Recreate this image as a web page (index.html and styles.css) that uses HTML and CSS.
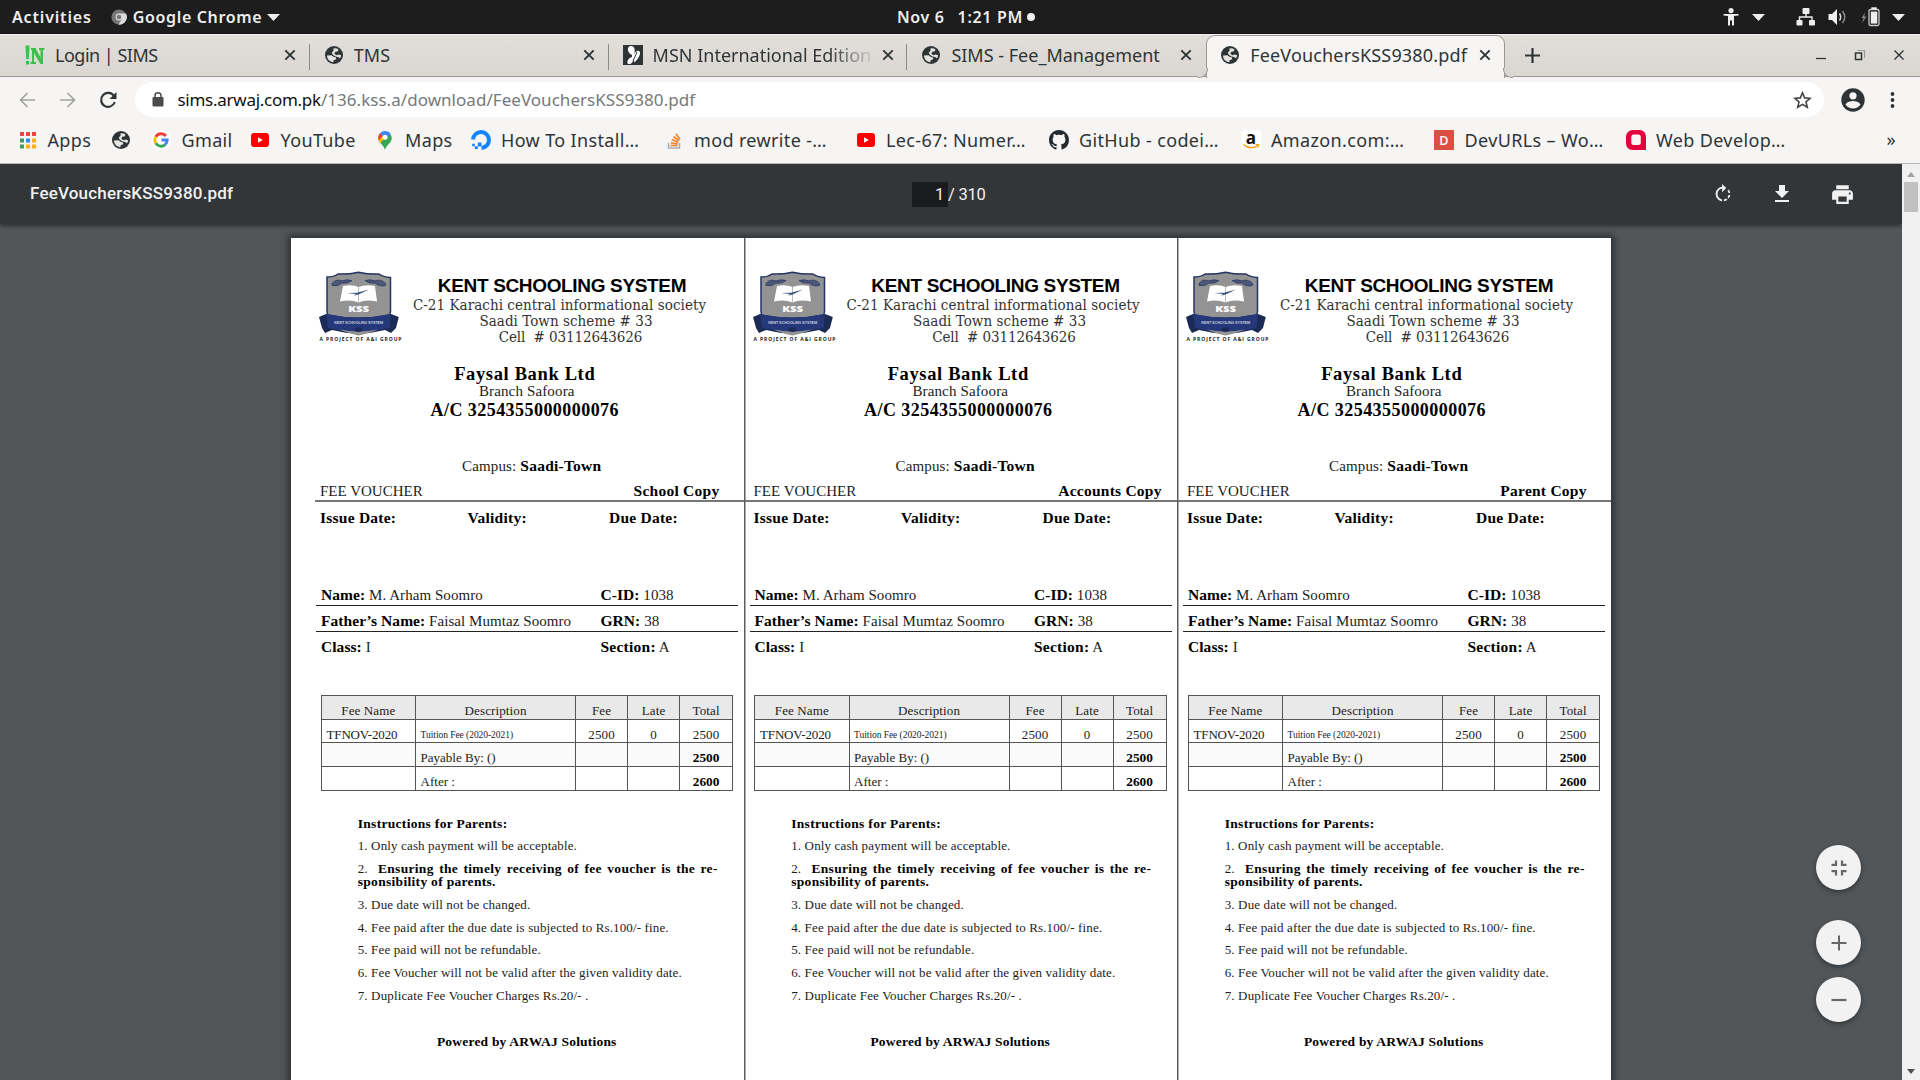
FILE: index.html
```html
<!DOCTYPE html>
<html lang="en">
<head>
<meta charset="utf-8">
<title>FeeVouchersKSS9380.pdf</title>
<link rel="stylesheet" href="styles.css">
</head>
<body>
<svg width="0" height="0" class="defs">
  <symbol id="globe" viewBox="0 0 20 20">
    <circle cx="10" cy="10" r="9" fill="#2e3436"/>
    <path d="M3 10.500L7.500 10.200L9.500 11.800L12 12.400L12.200 14.200L9.600 15.200L9.400 17.200C6 17 3.100 14.400 3 10.500ZM9.500 3.200L13 3.600L14.600 4.700L13.400 6.400L11.200 6.800L10.400 8.800L12.400 10.200L14.800 9.600L17.100 10.200C17 11.400 16.600 12.400 16 13.200L14 12L11.400 11.400L8.600 9.400L7.800 7.400L9.600 5.800Z" fill="#e6e4e1"/>
  </symbol>
  <symbol id="close" viewBox="0 0 12 12"><path d="M1.300 1.300L10.700 10.700M10.700 1.300L1.300 10.700" stroke="#2e3436" stroke-width="1.900" fill="none"/></symbol>
  <symbol id="caret" viewBox="0 0 13 7"><path d="M0 0H13L6.500 7Z" fill="#eee"/></symbol>
  <symbol id="youtube" viewBox="0 0 20 20"><rect x="1" y="3" width="18" height="14" rx="3" fill="#f00"/><path d="M8 7.200L12.800 10L8 12.800Z" fill="#fff"/></symbol>
</svg>

<header class="desktop-bar">
  <div class="desk-left">
    <span>Activities</span>
    <svg class="chrome-mark" viewBox="0 0 16 16"><circle cx="8" cy="8" r="7.600" fill="#777"/><path d="M8 4.500H15A7.600 7.600 0 0 1 7.500 15.600L11 9.800Z" fill="#ddd"/><circle cx="8" cy="8" r="3.400" fill="#ddd"/><circle cx="8" cy="8" r="2.300" fill="#777"/></svg>
    <span>Google Chrome</span>
    <svg class="caret"><use href="#caret"/></svg>
  </div>
  <div class="desk-clock"><span>Nov 6</span><span>1:21 PM</span><i></i></div>
  <div class="desk-right">
    <svg width="16" height="18" viewBox="0 0 16 18"><circle cx="8" cy="2.600" r="2.600" fill="#eee"/><path d="M.5 6H15.500V7.500L11 8V17.500H9V12.500H7V17.500H5V8L.5 7.500Z" fill="#eee"/></svg>
    <svg class="caret access"><use href="#caret"/></svg>
    <svg width="20" height="18" viewBox="0 0 20 18" fill="#eee"><rect x="6.500" y="0" width="7" height="6" rx="1"/><rect x=".5" y="12" width="6" height="5.500" rx="1"/><rect x="13" y="12" width="6" height="5.500" rx="1"/><path d="M3.500 13V9H16V13M10 5V9" stroke="#eee" stroke-width="1.400" fill="none"/></svg>
    <svg width="19" height="18" viewBox="0 0 19 18"><path d="M.5 6H4L9 1V17L4 12H.5Z" fill="#eee"/><path d="M11.500 5.500Q13.800 9 11.500 12.500" stroke="#ddd" stroke-width="1.500" fill="none"/><path d="M14.500 3Q19 9 14.500 15" stroke="#888" stroke-width="1.500" fill="none"/></svg>
    <svg width="19" height="20" viewBox="0 0 19 20"><path d="M4.500 5L.5 11H2.500L1 16L5.500 9.500H3Z" fill="#888"/><rect x="8" y="2.500" width="10" height="16" rx="1.500" fill="none" stroke="#ccc" stroke-width="1.300"/><rect x="10.300" y=".3" width="5.500" height="2" fill="#eee"/><rect x="9.800" y="4.600" width="6.500" height="12" fill="#eee"/></svg>
    <svg class="caret"><use href="#caret"/></svg>
  </div>
</header>

<nav class="tabs">
  <div class="tab">
    <svg class="fav" viewBox="0 0 20 20"><path d="M.5.500H4.500L3.800 14H1.200ZM1 16H4V19.500H1ZM6 3H10.500L15.500 12.500V5H14V3H19.500V5H18V19H15.500L9 8V17H11V19H5.500V17H7V5H6Z" fill="#3fbf4c"/></svg>
    <span class="title first">Login | SIMS</span><svg class="x"><use href="#close"/></svg>
  </div>
  <div class="tab"><svg class="fav"><use href="#globe"/></svg><span class="title">TMS</span><svg class="x"><use href="#close"/></svg></div>
  <div class="tab">
    <svg class="fav" viewBox="0 0 20 20"><rect width="20" height="20" fill="#2e3436"/><path d="M9 10C4 8 3.500 1 8 1C12 1 12.500 6 11 9.500C12 7 15 4 17 7C17.500 11 14 15 11.500 17.500L10.500 14C10 18 8 19.500 5 19C3.500 17 5 13 9 12Z" fill="#fff"/><path d="M10 16L14 7" stroke="#2e3436"/></svg>
    <span class="title fade">MSN International Edition</span><svg class="x"><use href="#close"/></svg>
  </div>
  <div class="tab before"><svg class="fav"><use href="#globe"/></svg><span class="title">SIMS - Fee_Management</span><svg class="x"><use href="#close"/></svg></div>
  <div class="tab active"><svg class="fav"><use href="#globe"/></svg><span class="title">FeeVouchersKSS9380.pdf</span><svg class="x"><use href="#close"/></svg></div>
  <div class="after">
    <svg width="15" height="15" viewBox="0 0 15 15"><path d="M7.500 0V15M0 7.500H15" stroke="#2e3436" stroke-width="2.200"/></svg>
    <div class="win">
      <svg width="12" height="12" viewBox="0 0 12 12"><path d="M1 9.500H11" stroke="#2e3436" stroke-width="1.300"/></svg>
      <svg width="12" height="12" viewBox="0 0 12 12" fill="none"><path d="M3.500 1.500H10.500V9" stroke="#999" stroke-width="1.200"/><rect x="1.500" y="4" width="6" height="6.500" stroke="#2e3436" stroke-width="1.500"/></svg>
      <svg width="12" height="12" viewBox="0 0 12 12"><path d="M1.500 1.500L10.500 10.500M10.500 1.500L1.500 10.500" stroke="#2e3436" stroke-width="1.400"/></svg>
    </div>
  </div>
</nav>

<div class="address-row">
  <svg class="nav-ic" width="17" height="16" viewBox="0 0 17 16" fill="none" stroke="#a2a2a1" stroke-width="1.700"><path d="M16 8H2M8.500 1L1.500 8L8.500 15"/></svg>
  <svg class="nav-ic" width="17" height="16" viewBox="0 0 17 16" fill="none" stroke="#a2a2a1" stroke-width="1.700"><path d="M1 8H15M8.500 1L15.500 8L8.500 15"/></svg>
  <svg width="18" height="18" viewBox="0 0 18 18"><path d="M15 5A7 7 0 1 0 15.800 11" stroke="#2e3436" stroke-width="2.100" fill="none"/><path d="M17.500 1V8H10.500Z" fill="#2e3436"/></svg>
  <div class="omnibox">
    <svg width="12" height="15" viewBox="0 0 12 15"><rect x=".5" y="5" width="11" height="9.500" rx="1" fill="#4b4b4b"/><path d="M3 6V3.800A3 3 0 0 1 9 3.800V6" stroke="#4b4b4b" stroke-width="1.500" fill="none"/></svg>
    <span class="url"><b>sims.arwaj.com.pk</b>/136.kss.a/download/FeeVouchersKSS9380.pdf</span>
    <svg width="19" height="18" viewBox="0 0 19 18"><path d="M9.500 1.800L11.700 6.900L17.200 7.300L13 10.900L14.300 16.300L9.500 13.400L4.700 16.300L6 10.900L1.800 7.300L7.300 6.900Z" fill="none" stroke="#444" stroke-width="1.600"/></svg>
  </div>
  <svg width="24" height="24" viewBox="0 0 24 24"><circle cx="12" cy="12" r="11.700" fill="#2e3436"/><circle cx="12" cy="7.800" r="3.600" fill="#f6f5f4"/><path d="M4.500 16.500C6 13.800 9.500 13 12 13S18 13.800 19.500 16.500C17.800 19 15 20.500 12 20.500S6.200 19 4.500 16.500Z" fill="#f6f5f4"/></svg>
  <svg width="5" height="16" viewBox="0 0 5 16" fill="#2e3436"><circle cx="2.500" cy="2" r="1.900"/><circle cx="2.500" cy="8" r="1.900"/><circle cx="2.500" cy="14" r="1.900"/></svg>
</div>

<div class="bookmarks">
  <div class="bm apps"><svg width="16" height="17" viewBox="0 0 16 17"><g fill="#f04343"><path d="M0 0H4V4H0ZM6 0H10V4H6ZM12 0H16V4H12Z"/></g><path d="M0 6.500H4V10.500H0ZM0 12.500H4V16.500H0Z" fill="#3d9d5a"/><path d="M6 6.500H10V10.500H6Z" fill="#2a8bf5"/><path d="M12 6.500H16V10.500H12ZM6 12.500H10V16.500H6ZM12 12.500H16V16.500H12Z" fill="#f9b01e"/></svg><span>Apps</span></div>
  <div class="bm"><svg class="fav"><use href="#globe"/></svg></div>
  <div class="bm"><svg class="fav" viewBox="0 0 20 20"><circle cx="10" cy="10" r="10" fill="#fff"/><g fill="none" stroke-width="2.900"><path d="M15 6A6.200 6.200 0 0 0 4.800 6.800" stroke="#ea4335"/><path d="M4.800 6.800A6.200 6.200 0 0 0 4.800 13.200" stroke="#fbbc05"/><path d="M4.800 13.200A6.200 6.200 0 0 0 14 14.800" stroke="#34a853"/><path d="M14 14.800A6.200 6.200 0 0 0 16.200 10H10.500" stroke="#4285f4"/></g></svg><span>Gmail</span></div>
  <div class="bm"><svg class="fav"><use href="#youtube"/></svg><span>YouTube</span></div>
  <div class="bm"><svg class="fav" viewBox="0 0 20 20"><path d="M3.300 9.500A6.800 6.800 0 0 1 16.800 7.500C16.800 13 11.500 14.500 10 20C9 15.500 4.500 13 3.300 9.500Z" fill="#34a853"/><path d="M3.300 9.500Q3 6 5 3.300L10 7.500L5.500 13Q3.800 11 3.300 9.500Z" fill="#fbbc04"/><path d="M3.200 8Q3.200 5 5 3.300L8 5.800L4 10.500Z" fill="#ea4335"/><path d="M5 3.300A6.800 6.800 0 0 1 15.800 4L10 10L7.500 6Z" fill="#4285f4"/><circle cx="10" cy="7.200" r="2.500" fill="#fff"/></svg><span>Maps</span></div>
  <div class="bm"><svg class="fav" viewBox="0 0 20 20"><path d="M2 9.500A8 8 0 1 1 10.500 18" stroke="#1285ff" stroke-width="4" fill="none"/><path d="M6.800 12.500H10.500V16.500H6.800ZM3.800 16.200H6.800V19H3.800ZM1.200 13.700H3.800V16.200H1.200Z" fill="#1285ff"/></svg><span>How To Install…</span></div>
  <div class="bm"><svg class="fav" viewBox="0 0 20 20"><path d="M4.500 13V18H15.500V13" stroke="#aab0b5" stroke-width="1.600" fill="none"/><path d="M6.500 15.500H13.500M6.800 12.700L13.700 14M7.700 9.500L14.200 12.300M9.500 6.500L15 10.800M12 3.800L16 9.500" stroke="#f48024" stroke-width="1.600"/></svg><span>mod rewrite -…</span></div>
  <div class="bm"><svg class="fav"><use href="#youtube"/></svg><span>Lec-67: Numer…</span></div>
  <div class="bm"><svg class="fav" viewBox="0 0 16 16"><path fill="#24292e" d="M8 0C3.580 0 0 3.580 0 8c0 3.540 2.290 6.530 5.470 7.590.4.070.55-.17.55-.38 0-.19-.01-.82-.01-1.490-2.010.37-2.530-.49-2.690-.94-.09-.23-.48-.94-.82-1.130-.28-.15-.68-.52-.01-.53.63-.01 1.080.58 1.230.82.72 1.210 1.870.87 2.330.66.070-.52.28-.87.51-1.070-1.780-.2-3.640-.89-3.640-3.950 0-.87.31-1.590.82-2.150-.08-.2-.36-1.020.08-2.120 0 0 .67-.21 2.200.82.64-.18 1.320-.27 2-.27s1.360.09 2 .27c1.530-1.040 2.200-.82 2.200-.82.44 1.100.16 1.920.08 2.120.51.56.82 1.270.82 2.150 0 3.070-1.870 3.750-3.650 3.950.29.25.54.73.54 1.480 0 1.070-.01 1.930-.01 2.200 0 .21.15.46.55.38A8.010 8.010 0 0 0 16 8c0-4.420-3.580-8-8-8z"/></svg><span>GitHub - codei…</span></div>
  <div class="bm"><svg class="fav" viewBox="0 0 20 20"><rect width="20" height="20" rx="3" fill="#fff"/><text x="10" y="13.500" class="amz">a</text><path d="M2.500 14.500Q9.500 20.500 17 15.500" stroke="#f90" stroke-width="1.500" fill="none"/><path d="M14.500 14.500H17.800L16.800 17.800" stroke="#f90" fill="none"/></svg><span>Amazon.com:…</span></div>
  <div class="bm"><svg class="fav" viewBox="0 0 20 20"><rect width="20" height="20" fill="#dc5044"/><text x="10" y="14.500" class="dev">D</text></svg><span>DevURLs – Wo…</span></div>
  <div class="bm"><svg class="fav" viewBox="0 0 20 20"><path d="M6 0H14Q20 1 20 7V20H6Q0 19 0 13V6Q1 1 6 0Z" fill="#e4003a"/><rect x="5.300" y="4.500" width="9.500" height="10.500" rx="2.500" fill="#f6f5f4"/></svg><span>Web Develop…</span></div>
  <span class="more">»</span>
</div>

<main class="viewer">
  <div class="stage">
    <div class="pdf-bar">
      <span class="pdf-name">FeeVouchersKSS9380.pdf</span>
      <div class="pager"><span class="page-no">1</span><span>/ 310</span></div>
      <div class="tools">
        <svg width="22" height="22" viewBox="0 0 24 24" fill="#f1f1f1"><path d="M15.550 5.550L11 1v3.070C7.060 4.560 4 7.920 4 12s3.050 7.440 7 7.930v-2.020c-2.840-.48-5-2.940-5-5.910s2.160-5.430 5-5.910V10l4.550-4.450zM19.930 11c-.17-1.390-.72-2.730-1.620-3.890l-1.420 1.420c.54.750.88 1.600 1.020 2.470h2.020zM13 17.900v2.020c1.390-.17 2.740-.71 3.900-1.610l-1.440-1.440c-.75.540-1.590.890-2.460 1.030zm3.890-2.420l1.420 1.410c.9-1.160 1.450-2.500 1.620-3.890h-2.020c-.14.870-.48 1.720-1.020 2.480z"/></svg>
        <svg width="24" height="24" viewBox="0 0 24 24" fill="#f1f1f1"><path d="M19 9h-4V3H9v6H5l7 7 7-7zM5 18v2h14v-2H5z"/></svg>
        <svg width="25" height="25" viewBox="0 0 24 24" fill="#f1f1f1"><path d="M19 8H5c-1.660 0-3 1.340-3 3v6h4v4h12v-4h4v-6c0-1.660-1.340-3-3-3zm-3 11H8v-5h8v5zm3-7c-.55 0-1-.45-1-1s.45-1 1-1 1 .45 1 1-.45 1-1 1zm-1-9H6v4h12V3z"/></svg>
      </div>
    </div>

    <div class="sheet">
      <section class="voucher">
        <div class="school">
          <svg class="crest" viewBox="316 270 90 76">
            <path d="M327 277Q334 277 338 274Q348 274.500 358.500 272.200Q369 274.500 379 274Q383 277 390.500 277.500L390.500 312Q388 328 358.500 334Q329 328 327 312Z" fill="#939393" stroke="#243463" stroke-width="1.500"/>
            <path d="M332 283.500Q336 278.500 342 281Q346 279 352 280.500Q348 284 342 283Q338 287 332 285.500ZM385.500 283.500Q381 278.500 375 281Q371 279 365 280.500Q369 284 375 283Q379 287 385.500 285.500Z" fill="#4d5877" stroke="#2f3d6b" stroke-width=".9"/>
            <path d="M343 286Q352 284 358.500 287Q366 284 375 286L377 301.500Q366 299 358.500 302.500Q350 299 340 301.500Z" fill="#fff"/>
            <path d="M358.500 287V302" stroke="#aaa" stroke-width=".8"/>
            <path d="M347 293L357 292.800L369 289.500L359 294.300L354 295.800L356 294Z" fill="#34527f"/>
            <text x="358.700" y="311.600" class="crest-kss" textLength="21" lengthAdjust="spacingAndGlyphs">KSS</text>
            <path d="M319 317L326 314Q358 321 391 314L398.800 317L396 328L391 333L385 330Q358 337 332 330L325 333L322 328Z" fill="#1b2b55"/>
            <path d="M326 314Q358 321 391 314L389.500 328Q358 335 328 328Z" fill="#25397a"/>
            <path d="M340 329.500Q358 333.500 378 329.500Q370 333 358.500 335.500Q347 333 340 329.500Z" fill="#939393"/>
            <ellipse cx="358.500" cy="329.500" rx="4" ry="2.300" fill="#1b2b55"/>
            <text x="358.700" y="323.600" class="crest-ribbon" textLength="49">KENT SCHOOLING SYSTEM</text>
            <text x="360.500" y="341.200" class="crest-group" textLength="82">A PROJECT OF A&amp;I GROUP</text>
          </svg>
          <div class="school-text">
            <h1>KENT SCHOOLING SYSTEM</h1>
            <p>C-21 Karachi central informational society</p>
            <p class="town">Saadi Town scheme # 33</p>
            <p class="cell">Cell&nbsp; # 03112643626</p>
          </div>
        </div>
        <div class="bank"><b class="bank-name">Faysal Bank Ltd</b><span class="branch">Branch Safoora</span><b class="account">A/C 3254355000000076</b></div>
        <div class="campus">Campus: <b>Saadi-Town</b></div>
        <div class="copy-row"><span>FEE VOUCHER</span><b class="copy">School Copy</b></div>
        <div class="dates"><b>Issue Date:</b><b>Validity:</b><b>Due Date:</b></div>
        <div class="student">
          <div><span><b class="tight">Name:</b> M. Arham Soomro</span><span><b class="tight">C-ID:</b> 1038</span></div>
          <div><span><b class="tight">Father’s Name:</b> Faisal Mumtaz Soomro</span><span><b class="tight">GRN:</b> 38</span></div>
          <div><span><b class="tight">Class:</b> I</span><span><b>Section:</b> A</span></div>
        </div>
        <table>
          <colgroup><col class="c1"><col class="c2"><col class="c3"><col class="c4"><col class="c5"></colgroup>
          <tr class="head"><td>Fee Name</td><td>Description</td><td>Fee</td><td>Late</td><td>Total</td></tr>
          <tr><td class="code">TFNOV-2020</td><td class="desc small">Tuition Fee (2020-2021)</td><td>2500</td><td>0</td><td>2500</td></tr>
          <tr class="shade"><td></td><td class="desc">Payable By: ()</td><td></td><td></td><td><b>2500</b></td></tr>
          <tr><td></td><td class="desc">After :</td><td></td><td></td><td><b>2600</b></td></tr>
        </table>
        <div class="rules">
          <p><b>Instructions for Parents:</b></p>
          <p>1. Only cash payment will be acceptable.</p>
          <p><span class="spread">2.&nbsp; <b>Ensuring the timely receiving of fee voucher is the re-</b></span><b>sponsibility of parents.</b></p>
          <p>3. Due date will not be changed.</p>
          <p>4. Fee paid after the due date is subjected to Rs.100/- fine.</p>
          <p>5. Fee paid will not be refundable.</p>
          <p>6. Fee Voucher will not be valid after the given validity date.</p>
          <p>7. Duplicate Fee Voucher Charges Rs.20/- .</p>
        </div>
        <div class="powered">Powered by ARWAJ Solutions</div>
      </section>
    </div>

    <div class="zoom-buttons">
      <button class="fit"><svg width="16" height="16" viewBox="0 0 16 16" fill="none" stroke="#666" stroke-width="2.200"><path d="M.5 4.900H5V.5M15.500 4.900H11V.5M.5 11.100H5V15.500M15.500 11.100H11V15.500"/></svg></button>
      <button><svg width="16" height="16" viewBox="0 0 16 16"><path d="M8 .5V15.500M.5 8H15.500" stroke="#666" stroke-width="2"/></svg></button>
      <button><svg width="16" height="16" viewBox="0 0 16 16"><path d="M.5 8H15.500" stroke="#666" stroke-width="2.200"/></svg></button>
    </div>
  </div>
  <div class="scrollbar">
    <svg width="8" height="5" viewBox="0 0 8 5"><path d="M0 5L4 0L8 5Z" fill="#a3a3a3"/></svg>
    <i></i>
    <svg class="down" width="8" height="5" viewBox="0 0 8 5"><path d="M0 0H8L4 5Z" fill="#505050"/></svg>
  </div>
</main>
<script src="vouchers.js"></script>
</body>
</html>
```
FILE: styles.css
```css
* { box-sizing: border-box; }
body {
  margin: 0;
  width: 1920px;
  height: 1080px;
  overflow: hidden;
  display: flex;
  flex-direction: column;
  font-family: "Noto Sans", sans-serif;
  color: #2e3436;
}
svg { display: block; flex: none; }
.defs { position: absolute; }
.fav { width: 20px; height: 20px; }
h1, p { margin: 0; font-weight: normal; }

/* desktop bar */
.desktop-bar {
  height: 34px;
  flex: none;
  display: grid;
  grid-template-columns: 897px 1fr 211px;
  background: #1d1d1d;
  border-bottom: 1px solid #140f16;
  color: #eee;
  font-size: 16px;
  font-weight: 600;
  line-height: 34px;
  letter-spacing: .66px;
}
.desk-left, .desk-clock, .desk-right { display: flex; align-items: center; white-space: nowrap; }
.desk-left { padding-left: 12px; }
.desk-left span:first-child { letter-spacing: .83px; }
.chrome-mark { width: 16px; height: 16px; margin: 0 6px 0 19px; }
.caret { width: 13px; height: 7px; }
.desk-left .caret { margin-left: 5px; }
.desk-clock span + span { margin-left: 13px; }
.desk-clock i { width: 8px; height: 8px; border-radius: 50%; background: #eee; margin-left: 4px; }
.desk-right { justify-content: flex-end; padding-right: 15px; }
.access { margin: 0 31px 0 13px; }
.desk-right svg:nth-child(4) { margin: 0 14px 0 12px; }
.desk-right svg:nth-child(6) { margin-left: 12px; }

/* tab strip */
.tabs {
  height: 43px;
  flex: none;
  display: flex;
  padding-left: 11px;
  background: linear-gradient(#e1dedb, #dad7d2);
  border-top: 1px solid #f3f2f0;
  box-shadow: inset 0 -1px #9b9893;
}
.tab {
  width: 298.800px;
  height: 43px;
  display: flex;
  align-items: center;
  padding: 0 12px 3px 14px;
  position: relative;
}
.tab::after {
  content: "";
  position: absolute;
  right: 0;
  top: 9px;
  width: 1px;
  height: 26px;
  background: #8d8a86;
}
.tab.before::after { display: none; }
.title {
  width: 219px;
  margin: 0 10px 0 10px;
  font-size: 18px;
  line-height: 30px;
  letter-spacing: 0;
  white-space: nowrap;
  overflow: hidden;
}
.title.first { letter-spacing: -.5px; }
.active .title { letter-spacing: .16px; }
.fade { -webkit-mask-image: linear-gradient(90deg, #000 80%, transparent 102%); mask-image: linear-gradient(90deg, #000 80%, transparent 102%); }
.x { width: 12px; height: 12px; }
.tab.active {
  background: #f6f5f4;
  border: 1px solid #9b9893;
  border-width: 1px 1px 0;
  border-radius: 9px 9px 0 0;
  padding: 0 11px 4px 13px;
}
.tab.active::before, .tab.active::after {
  content: "";
  position: absolute;
  top: auto;
  bottom: 0;
  width: 9px;
  height: 9px;
  border: 1px solid #9b9893;
  background: #dad7d2;
}
.tab.active::before { left: -9px; border-width: 0 1px 1px 0; border-radius: 0 0 9px 0; }
.tab.active::after { right: -9px; border-width: 0 0 1px 1px; border-radius: 0 0 0 9px; }
.after { flex: 1; display: flex; align-items: center; justify-content: space-between; padding: 0 15px 2px 20px; }
.win { display: flex; gap: 27px; }

/* address row */
.address-row {
  height: 43px;
  flex: none;
  display: flex;
  align-items: center;
  padding: 2px 25px 0 19px;
  background: #f6f5f4;
}
.nav-ic { margin-right: 23px; }
.omnibox {
  width: 1690px;
  height: 35px;
  display: flex;
  align-items: center;
  margin: 0 17px 0 18px;
  padding: 0 12px 0 17px;
  border-radius: 18px;
  background: #fff;
}
.address-row > svg:last-child { margin-left: 25px; }
.url {
  flex: 1;
  margin-left: 13.500px;
  font-size: 17px;
  line-height: 30px;
  letter-spacing: .04px;
  color: #75797b;
}
.url b { font-weight: normal; color: #111; letter-spacing: -.27px; }

/* bookmarks */
.bookmarks {
  height: 44px;
  flex: none;
  display: grid;
  grid-template-columns: 91px 40px 99px 124.500px 96px 193px 192px 193px 192px 193.500px 191.500px 261px 20px;
  align-items: center;
  padding: 0 0 3px 20px;
  background: #f6f5f4;
  border-bottom: 1px solid #b9b6b1;
}
.bm { display: flex; align-items: center; gap: 10.500px; font-size: 18px; line-height: 30px; letter-spacing: .36px; white-space: nowrap; }
.bm.apps { gap: 11.500px; }
.more { font-size: 18px; line-height: 26px; margin-bottom: 3px; }
.amz { font: bold 17px "Open Sans", sans-serif; text-anchor: middle; fill: #111; }
.dev { font: 600 12.500px "Open Sans", sans-serif; text-anchor: middle; fill: #fff; }

/* viewer */
.viewer { flex: 1; min-height: 0; display: flex; }
.stage { width: 1902px; height: 916px; position: relative; overflow: hidden; background: #525659; }
.pdf-bar {
  height: 60px;
  display: grid;
  grid-template-columns: 912px 1fr 190px;
  background: #323639;
  box-shadow: 0 2px 4px rgba(0, 0, 0, .45);
  color: #f1f1f1;
  font-family: Roboto, sans-serif;
}
.pdf-name { padding-left: 30px; font-size: 17px; font-weight: 500; line-height: 58px; letter-spacing: .19px; }
.pager { display: flex; align-items: center; font-size: 16.500px; letter-spacing: -.25px; }
.page-no { width: 36px; height: 25px; line-height: 26px; padding-right: 4px; text-align: right; background: #191b1c; }
.tools { display: flex; align-items: center; gap: 36px; }

.sheet {
  width: 1320px;
  height: 900px;
  margin: 14px 0 0 291px;
  padding-left: 19px;
  display: flex;
  overflow: hidden;
  background: #fff;
  box-shadow: 0 0 7px 3px rgba(0, 0, 0, .45);
}
.voucher {
  width: 433.500px;
  flex: none;
  font-family: "Liberation Serif", serif;
  font-size: 15px;
  line-height: 20px;
  color: #1c1c1c;
}
.voucher + .voucher { box-shadow: inset 1.500px 0 #5c5c5c; }
.voucher b { font-size: 15.500px; line-height: 1; color: #000; letter-spacing: .24px; }
.voucher b.tight { letter-spacing: .06px; }

.school { display: flex; padding-top: 32px; height: 107px; }
.crest { width: 90px; height: 76px; margin-left: 6px; overflow: visible; }
.crest-kss { font: 800 9.500px "Open Sans", sans-serif; text-anchor: middle; fill: #fff; }
.crest-ribbon { font: bold 3.800px "Liberation Sans", sans-serif; text-anchor: middle; fill: #c4cade; }
.crest-group { font: bold 5px "Open Sans", sans-serif; text-anchor: middle; fill: #222; }
.school-text { width: 294px; margin: 5px 0 0 6.500px; text-align: center; white-space: nowrap; }
.school-text h1 { font: bold 19px/22px "Liberation Sans", sans-serif; letter-spacing: -.34px; padding-left: 5px; color: #000; }
.school-text p { font: 15px/16px "DejaVu Serif Condensed", "DejaVu Serif", serif; font-stretch: condensed; letter-spacing: .05px; color: #333; }
.school-text .town { padding-left: 13px; }
.school-text .cell { padding-left: 22px; letter-spacing: -.1px; }

.bank { display: flex; flex-direction: column; align-items: center; margin-top: 19px; padding-right: 4px; }
.voucher .bank-name { font-size: 18.500px; line-height: 20px; letter-spacing: .64px; }
.branch { line-height: 15px; letter-spacing: .14px; padding-left: 4px; }
.voucher .account { font-size: 18px; line-height: 22px; letter-spacing: .45px; }
.campus { margin-top: 35px; padding-left: 10px; text-align: center; letter-spacing: .14px; }
.copy-row {
  height: 26px;
  display: flex;
  justify-content: space-between;
  margin: 0 -6px 0 5px;
  padding: 5px 0 0 5px;
  border-bottom: 2px solid #777;
}
.copy-row .copy { width: 150px; line-height: 20px; margin-right: -2px; text-align: center; }
.dates { display: grid; grid-template-columns: 147.500px 141.500px 1fr; padding: 5.600px 0 0 10px; }
.dates b { line-height: 20px; }
.student { margin: 52.400px 5.500px 0 6px; letter-spacing: .06px; }
.student div { display: grid; grid-template-columns: 279.500px 1fr; height: 26px; padding: 5px 0 0 5px; border-bottom: 1px solid #222; }
.student div:last-child { border-bottom: 0; }

table { width: 412px; margin: 37px 0 0 10.600px; table-layout: fixed; border-collapse: collapse; }
.c1 { width: 94.500px; }
.c2 { width: 160px; }
.c3, .c4 { width: 52px; }
.c5 { width: 53px; }
td {
  height: 23.700px;
  padding: 8px 0 0;
  border: 1px solid #555;
  font-size: 13px;
  line-height: 14px;
  text-align: center;
  vertical-align: top;
  letter-spacing: .12px;
}
.voucher td b { font-size: 13.300px; letter-spacing: 0; }
.head td { background: #e9e9e9; }
.shade td { background: #fafafa; }
td.code { text-align: left; padding-left: 5px; letter-spacing: -.18px; }
td.desc { text-align: left; padding-left: 4.500px; letter-spacing: 0; }
td.small { font-size: 9.500px; letter-spacing: -.05px; }

.rules { width: 360px; margin: 26px 0 0 47.700px; font-size: 13px; line-height: 13px; letter-spacing: .14px; white-space: nowrap; }
.rules p { margin-bottom: 9.900px; }
.rules p:first-child { margin-bottom: 9.200px; }
.voucher .rules b { font-size: 13.500px; line-height: 13px; letter-spacing: .31px; }
.spread { display: block; height: 13px; white-space: normal; text-align: justify; text-align-last: justify; }
.powered { margin-top: 32.500px; text-align: center; font-size: 13.500px; line-height: 13px; font-weight: bold; letter-spacing: .2px; color: #000; }

.zoom-buttons { position: absolute; right: 41px; bottom: 58px; display: flex; flex-direction: column; gap: 12px; }
.zoom-buttons button {
  width: 45px;
  height: 45px;
  display: flex;
  align-items: center;
  justify-content: center;
  padding: 0;
  border: 0;
  border-radius: 50%;
  background: #f2f2f2;
  box-shadow: 0 2px 5px rgba(0, 0, 0, .4);
}
.zoom-buttons .fit { margin-bottom: 18px; }

.scrollbar { width: 18px; display: flex; flex-direction: column; align-items: center; padding: 8px 0 6px; background: #f1f1f1; }
.scrollbar i { width: 14px; height: 30px; margin-top: 5px; background: #c1c1c1; }
.scrollbar .down { margin-top: auto; }
```
FILE: vouchers.js
```js
// Every sheet carries the same voucher once per recipient.
const sheet = document.querySelector('.sheet');
const first = sheet.querySelector('.voucher');
for (const label of ['Accounts Copy', 'Parent Copy']) {
  const voucher = first.cloneNode(true);
  voucher.querySelector('.copy').textContent = label;
  sheet.appendChild(voucher);
}
```
